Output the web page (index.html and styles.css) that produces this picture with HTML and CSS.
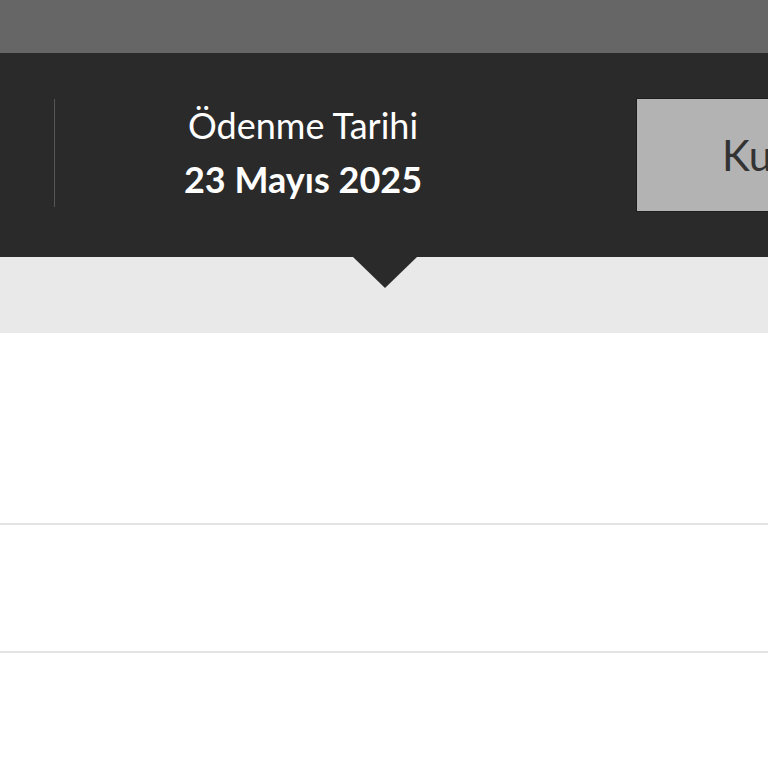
FILE: index.html
```html
<!DOCTYPE html>
<html lang="tr">
<head>
    <meta charset="UTF-8">
    <meta name="viewport" content="width=device-width, initial-scale=1.0">
    <title>Fatura Özeti</title>
    <link rel="stylesheet" href="styles.css">
</head>
<body>

    <!-- Top bar -->
    <div class="topbar"></div>

    <!-- Bill summary -->
    <div class="summary">
        <div class="summary-left"></div>
        <div class="divider"></div>
        <div class="summary-item">
            <span class="label">Ödenme Tarihi</span>
            <span class="value">23 Mayıs 2025</span>
        </div>
        <button class="action">Kurumsal</button>
        <div class="pointer"></div>
    </div>

    <div class="subbar"></div>

    <!-- Rows -->
    <div class="row row-tall"></div>
    <div class="row row-short"></div>
    <div class="row"></div>

</body>
</html>
```

FILE: styles.css
```css
* {
    margin: 0;
    padding: 0;
    box-sizing: border-box;
}

body {
    font-family: 'Lato', 'Open Sans', sans-serif;
    background-color: #ffffff;
    overflow: hidden;
    height: 768px;
}

.topbar {
    height: 53px;
    background-color: #666666;
}

.summary {
    position: relative;
    height: 204px;
    background-color: #2a2a2a;
    display: flex;
    align-items: center;
    overflow: visible;
}

.summary-left {
    width: 54px;
    flex-shrink: 0;
}

.divider {
    width: 1px;
    height: 108px;
    margin-top: -4px;
    background-color: #555555;
    flex-shrink: 0;
}

.summary-item {
    width: 496px;
    flex-shrink: 0;
    margin-top: -6px;
    display: flex;
    flex-direction: column;
    align-items: center;
    color: #ffffff;
}

.label {
    font-size: 36px;
    line-height: 48px;
    margin-bottom: 5px;
}

.value {
    font-size: 36px;
    font-weight: bold;
    line-height: 50px;
}

.action {
    margin-left: 85px;
    width: 132px;
    height: 114px;
    flex-shrink: 0;
    background-color: #b3b3b3;
    border: 1px solid #1e1e1e;
    border-right: none;
    color: #333333;
    font-family: inherit;
    font-size: 42px;
    text-align: left;
    padding-left: 85px;
    white-space: nowrap;
    overflow: hidden;
}

/* little arrow under the active item */
.pointer {
    position: absolute;
    left: 353px;
    bottom: -31px;
    width: 0;
    height: 0;
    border-left: 32px solid transparent;
    border-right: 32px solid transparent;
    border-top: 31px solid #2a2a2a;
}

.subbar {
    height: 76px;
    background-color: #e9e9e9;
}

.row {
    border-bottom: 2px solid #e3e3e3;
    height: 128px;
}

.row-tall {
    height: 192px;
}

.row-short {
    height: 128px;
}
```
